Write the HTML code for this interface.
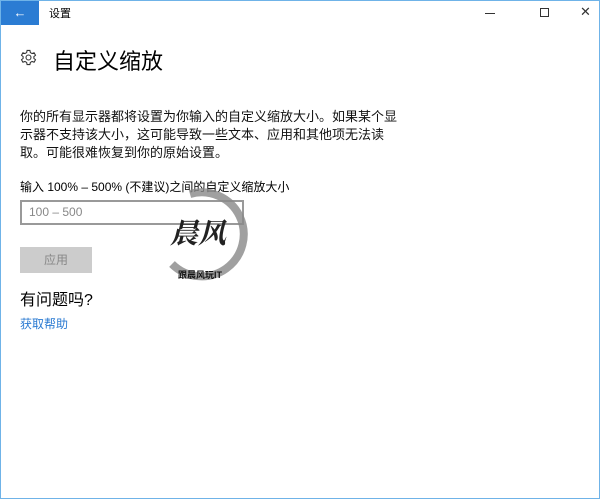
<!DOCTYPE html>
<html><head><meta charset="utf-8"><style>
*{margin:0;padding:0;box-sizing:border-box}
body{width:600px;height:499px;background:#fff;position:relative;overflow:hidden;font-family:"Liberation Sans","Noto Sans CJK SC",sans-serif;color:#000}
.frame{position:absolute;left:0;top:0;width:600px;height:499px;border:1px solid #6fb3e8}
.back{position:absolute;left:1px;top:1px;width:38px;height:24px;background:#2b7cd3;color:#fff;font-size:13px;text-align:center;line-height:24px}
.t{position:absolute;font-size:12px}
</style></head><body>
<div class="frame"></div>
<div class="back">&#8592;</div>
<div class="t" style="left:49px;top:5px;font-size:11px">设置</div>
<div style="position:absolute;left:485px;top:13px;width:10px;height:1px;background:#333"></div>
<div style="position:absolute;left:540px;top:8px;width:9px;height:9px;border:1px solid #333"></div>
<div class="t" style="left:580px;top:4px;font-size:13px;color:#333">&#10005;</div>
<svg style="position:absolute;left:20px;top:49px" width="17" height="17" viewBox="0 0 24 24" fill="none" stroke="#333" stroke-width="1.5"><circle cx="12" cy="12" r="3.5"/><path d="M10 2h4l.6 3 2.4 1.4 2.9-1 2 3.4-2.3 2v2.4l2.3 2-2 3.4-2.9-1-2.4 1.4-.6 3h-4l-.6-3-2.4-1.4-2.9 1-2-3.4 2.3-2v-2.4l-2.3-2 2-3.4 2.9 1 2.4-1.4z"/></svg>
<div class="t" style="left:53px;top:44px;font-size:22px">自定义缩放</div>
<div class="t" style="left:20px;top:108px;font-size:13px;line-height:18px;white-space:nowrap;color:#111">你的所有显示器都将设置为你输入的自定义缩放大小。如果某个显<br>示器不支持该大小，这可能导致一些文本、应用和其他项无法读<br>取。可能很难恢复到你的原始设置。</div>
<div class="t" style="left:20px;top:178px">输入 100% – 500% (不建议)之间的自定义缩放大小</div>
<div style="position:absolute;left:20px;top:200px;width:224px;height:25px;border:2px solid #999"></div>
<div class="t" style="left:29px;top:205px;color:#888">100 – 500</div>
<div style="position:absolute;left:20px;top:247px;width:72px;height:26px;background:#ccc;color:#888;font-size:12px;text-align:center;line-height:26px">应用</div>
<div class="t" style="left:20px;top:286px;font-size:16px">有问题吗?</div>
<div class="t" style="left:20px;top:315px;color:#2a7ad2">获取帮助</div>
<svg style="position:absolute;left:150px;top:180px" width="110" height="110"><path d="M40 14 A42 42 0 1 1 22 84" fill="none" stroke="#888" stroke-width="8" opacity=".8"/></svg>
<div class="t" style="left:170px;top:212px;font-size:28px;font-family:'Noto Serif CJK SC',serif;font-weight:bold;color:#222;font-style:italic">晨风</div>
<div class="t" style="left:178px;top:268px;font-size:9px;font-weight:bold;color:#111">跟晨风玩IT</div>
</body></html>
